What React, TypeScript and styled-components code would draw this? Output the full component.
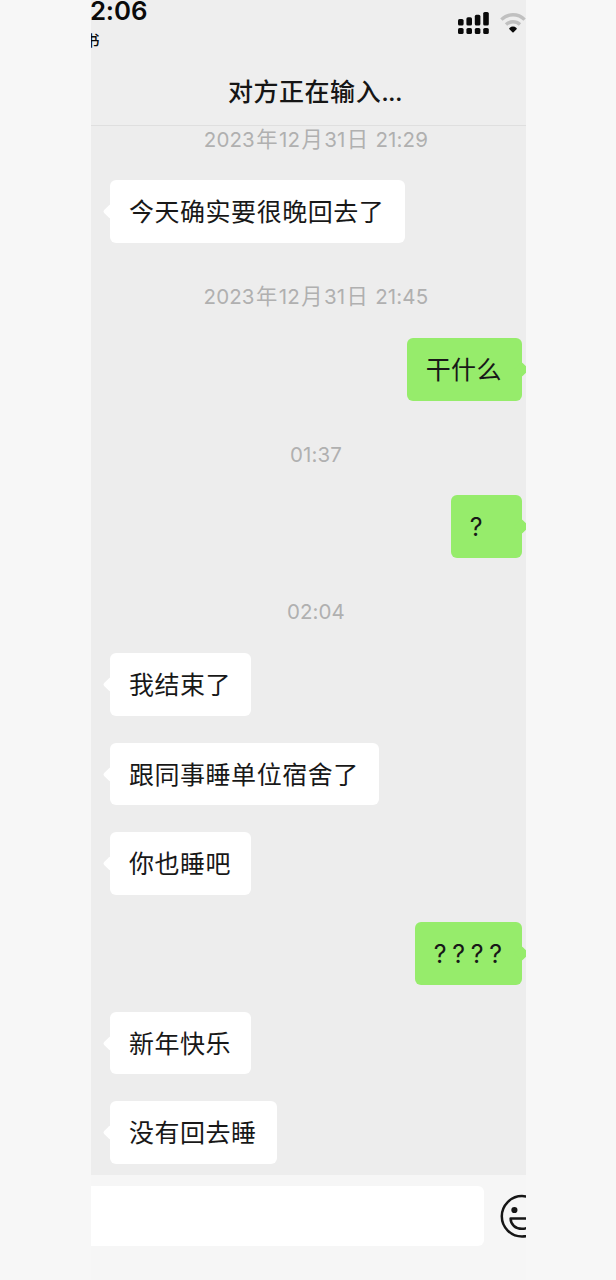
import React from 'react';
import styled, { createGlobalStyle } from 'styled-components';

const GlobalStyle = createGlobalStyle`
  * { box-sizing: border-box; }
  body {
    margin: 0;
    background: #f7f7f7;
    font-family: Inter, "Noto Sans CJK SC", sans-serif;
  }
`;

const Phone = styled.main`
  width: 435px;
  height: 1280px;
  margin-left: 91.4px;
  overflow: hidden;
  display: flex;
  flex-direction: column;
`;

const Header = styled.header`
  flex: none;
  height: 126px;
  background: #eeeeee;
  border-bottom: 1px solid #dfdfdf;
`;

const StatusBar = styled.div`
  display: flex;
  justify-content: space-between;
  height: 60px;
`;

const StatusLeft = styled.div`
  color: #0a0a0a;
`;

const Clock = styled.div`
  margin-left: -1.5px;
  font-size: 25.8px;
  line-height: 22px;
  font-weight: 600;
  letter-spacing: -0.1px;
`;

const BackApp = styled.div`
  margin: 8px 0 0 -7px;
  font-size: 15px;
  line-height: 22px;
  font-weight: 500;
`;

const StatusIcons = styled.div`
  display: flex;
  gap: 11px;
  padding-top: 12px;
`;

const Title = styled.h1`
  margin: 13px 0 0;
  padding-left: 12px;
  text-align: center;
  font-size: 25px;
  line-height: 38px;
  font-weight: 500;
  letter-spacing: 0.55px;
  color: #161616;
`;

const Dots = styled.span`
  letter-spacing: -0.7px;
`;

const Chat = styled.section`
  flex: none;
  height: 1049px;
  background: #ededed;
  display: flex;
  flex-direction: column;
  overflow: hidden;
`;

const Time = styled.time`
  flex: none;
  height: 26px;
  margin: 40.3px 0 28.4px;
  padding-left: 14px;
  line-height: 27px;
  text-align: center;
  font-size: 20.5px;
  letter-spacing: 0.1px;
  white-space: pre;
  color: #b0b0b0;
  &:first-child { margin-top: 0; }
`;

const DateUnit = styled.span`
  padding: 0 1.4px;
  font-size: 21.3px;
  line-height: 1;
`;

const Bubble = styled.div<{ $mine?: boolean; $spacing?: number; $width?: number }>`
  position: relative;
  flex: none;
  align-self: ${p => (p.$mine ? 'flex-end' : 'flex-start')};
  height: 62.8px;
  width: ${p => (p.$width ? `${p.$width}px` : 'auto')};
  margin: ${p => (p.$mine ? '0 4.5px 0 0' : '0 0 0 18.6px')};
  padding: 0 20.3px 0 18.9px;
  border-radius: 6px;
  background: ${p => (p.$mine ? '#96ec6b' : '#ffffff')};
  color: #181818;
  font-size: 25px;
  line-height: 64px;
  letter-spacing: ${p => p.$spacing ?? 0.55}px;
  white-space: nowrap;

  & + & { margin-top: 26.9px; }

  &::before {
    content: '';
    position: absolute;
    top: 26px;
    ${p => (p.$mine ? 'right: -5px;' : 'left: -5px;')}
    width: 11px;
    height: 11px;
    border-radius: 2px;
    background: inherit;
    transform: rotate(45deg);
  }
`;

const Footer = styled.footer`
  flex: 1;
  display: flex;
  align-items: flex-start;
  gap: 16px;
  padding-top: 10.5px;
  background: #f6f6f6;
`;

const Input = styled.div`
  flex: none;
  width: 393px;
  height: 60.5px;
  border-radius: 0 6px 6px 0;
  background: #ffffff;
`;

const EmojiIcon = styled.svg`
  flex: none;
  margin-top: 8px;
`;

type Item =
  | { kind: 'time'; text: string }
  | { kind: 'message'; text: string; mine?: boolean; spacing?: number; width?: number };

const items: Item[] = [
  { kind: 'time', text: '2023年12月31日 21:29' },
  { kind: 'message', text: '今天确实要很晚回去了' },
  { kind: 'time', text: '2023年12月31日 21:45' },
  { kind: 'message', text: '干什么', mine: true, width: 115, spacing: 0.3 },
  { kind: 'time', text: '01:37' },
  { kind: 'message', text: '?', mine: true, width: 71 },
  { kind: 'time', text: '02:04' },
  { kind: 'message', text: '我结束了' },
  { kind: 'message', text: '跟同事睡单位宿舍了' },
  { kind: 'message', text: '你也睡吧' },
  { kind: 'message', text: '????', mine: true, spacing: 5.7, width: 107 },
  { kind: 'message', text: '新年快乐' },
  { kind: 'message', text: '没有回去睡' },
];

const signalBars = [
  { x: 0, y: 7 },
  { x: 8.4, y: 5.3 },
  { x: 16.8, y: 2.8 },
  { x: 25.2, y: 0 },
];

function SignalIcon() {
  return (
    <svg width="31" height="23" viewBox="0 0 31 23">
      {signalBars.map(b => (
        <g key={b.x} fill="#0a0a0a">
          <rect x={b.x} y={b.y} width="5.6" height={13.6 - b.y} rx="1.6" />
          <rect x={b.x} y="16" width="5.6" height="6" rx="1.6" />
        </g>
      ))}
    </svg>
  );
}

function WifiIcon() {
  return (
    <svg width="26" height="22" viewBox="0 0 26 22" fill="none">
      <path d="M1.4 7.6C8 1.2 18 1.2 24.6 7.6" stroke="#c0c0c0" strokeWidth="3.4" />
      <path d="M6 12.6C10 8.8 16 8.8 20 12.6" stroke="#c0c0c0" strokeWidth="3.4" />
      <path
        d="M10 16.6C11.8 15.2 14.2 15.2 16 16.6L13 19.6Z"
        fill="#0a0a0a"
        stroke="#0a0a0a"
        strokeWidth="1.6"
        strokeLinejoin="round"
      />
    </svg>
  );
}

function TimeText({ text }: { text: string }) {
  return (
    <Time>
      {text.split(/([年月日])/).map((part, i) =>
        i % 2 ? <DateUnit key={i}>{part}</DateUnit> : part,
      )}
    </Time>
  );
}

export default function App() {
  return (
    <>
      <GlobalStyle />
      <Phone>
        <Header>
          <StatusBar>
            <StatusLeft>
              <Clock>2:06</Clock>
              <BackApp>书</BackApp>
            </StatusLeft>
            <StatusIcons>
              <SignalIcon />
              <WifiIcon />
            </StatusIcons>
          </StatusBar>
          <Title>
            对方正在输入<Dots>...</Dots>
          </Title>
        </Header>
        <Chat>
          {items.map((item, i) =>
            item.kind === 'time' ? (
              <TimeText key={i} text={item.text} />
            ) : (
              <Bubble key={i} $mine={item.mine} $spacing={item.spacing} $width={item.width}>
                {item.text}
              </Bubble>
            ),
          )}
        </Chat>
        <Footer>
          <Input />
          <EmojiIcon width="44" height="44" viewBox="0 0 44 44" fill="none" stroke="#161616" strokeWidth="2.5">
            <circle cx="22" cy="22.3" r="20.2" />
            <circle cx="14.4" cy="16" r="3.1" fill="#161616" stroke="none" />
            <circle cx="29.6" cy="16" r="3.1" fill="#161616" stroke="none" />
            <path d="M10.6 24.6H33.4C33.4 30.6 28.4 34.8 22 34.8S10.6 30.6 10.6 24.6Z" strokeLinejoin="round" />
          </EmojiIcon>
        </Footer>
      </Phone>
    </>
  );
}
